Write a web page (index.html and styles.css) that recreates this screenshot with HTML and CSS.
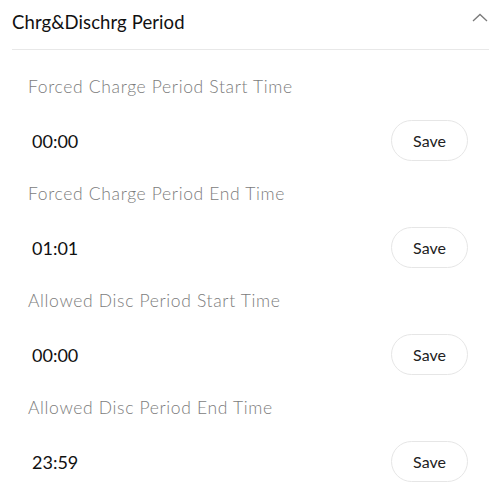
FILE: index.html
```html
<!DOCTYPE html>
<html lang="en">
<head>
    <meta charset="UTF-8">
    <meta name="viewport" content="width=device-width, initial-scale=1.0">
    <title>Chrg&amp;Dischrg Period</title>
    <link rel="stylesheet" href="styles.css">
</head>
<body>
    <section class="panel">
        <header class="panel-head">
            <h2>Chrg&amp;Dischrg Period</h2>
            <svg class="chevron" width="16" height="9" viewBox="0 0 16 9">
                <polyline points="1,8 8,1.5 15,8" fill="none" stroke="#7a7a7a" stroke-width="1.3"/>
            </svg>
        </header>

        <div class="fields">
            <div class="field">
                <p class="field-label">Forced Charge Period Start Time</p>
                <div class="field-row">
                    <span class="field-value">00:00</span>
                    <button class="save-btn">Save</button>
                </div>
            </div>
            <div class="field">
                <p class="field-label">Forced Charge Period End Time</p>
                <div class="field-row">
                    <span class="field-value">01:01</span>
                    <button class="save-btn">Save</button>
                </div>
            </div>
            <div class="field">
                <p class="field-label">Allowed Disc Period Start Time</p>
                <div class="field-row">
                    <span class="field-value">00:00</span>
                    <button class="save-btn">Save</button>
                </div>
            </div>
            <div class="field">
                <p class="field-label">Allowed Disc Period End Time</p>
                <div class="field-row">
                    <span class="field-value">23:59</span>
                    <button class="save-btn">Save</button>
                </div>
            </div>
        </div>
    </section>
</body>
</html>
```

FILE: styles.css
```css
body {
    margin: 0;
    padding: 0;
    background-color: #fff;
    font-family: 'Lato', 'Noto Sans', sans-serif;
    color: #111;
}

.panel {
    padding: 0 12px;
}

.panel-head {
    display: flex;
    justify-content: space-between;
    align-items: flex-start;
    padding: 10px 0 15px;
    border-bottom: 1px solid #e8e8e8;
}

.panel-head h2 {
    margin: 0;
    font-size: 18.5px;
    font-weight: 400;
    line-height: 24px;
    letter-spacing: 0.1px;
}

.chevron {
    margin-top: 3px;
    margin-right: 1px;
}

.fields {
    padding-top: 4px;
}

.field {
    padding: 21px 21px 0 16px;
}

.field-label {
    margin: 0 0 21px;
    font-size: 17.5px;
    font-weight: 300;
    line-height: 24px;
    letter-spacing: 0.65px;
    color: #7c7c7c;
}

.field-row {
    display: flex;
    justify-content: space-between;
    align-items: center;
    height: 41px;
}

.field-value {
    padding-left: 4px;
    font-size: 18px;
}

.save-btn {
    width: 77px;
    height: 41px;
    border: 1px solid #e6e6e6;
    border-radius: 21px;
    background-color: #fff;
    font-family: inherit;
    font-size: 16px;
    color: #222;
    cursor: pointer;
}
```
